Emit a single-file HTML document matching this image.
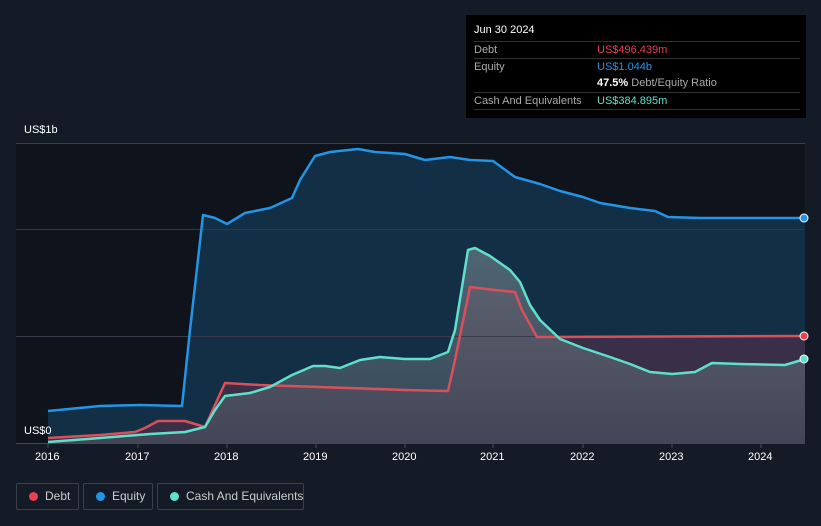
<!DOCTYPE html>
<html><head><meta charset="utf-8"><style>
html,body{margin:0;width:821px;height:526px;overflow:hidden}
body{background:#151b26;font-family:"Liberation Sans",sans-serif;position:relative}
.tt{position:absolute;left:466px;top:15px;width:340px;height:103px;background:#000;color:#fff;font-size:11px}
.tt .r{position:absolute;left:8px;right:6px;border-top:1px solid #333;height:17px;line-height:17px;color:#aaa}
.tt .v{position:absolute;left:123px}
.lg{position:absolute;top:483px;height:27px;border:1px solid #3a404b;border-radius:2px;color:#ccc;font-size:12px;line-height:25px;box-sizing:border-box;white-space:nowrap}
.lg i{position:absolute;left:12px;top:8px;width:9px;height:9px;border-radius:50%}
.lg span{position:absolute;left:28px}
.ax{position:absolute;color:#fff;font-size:11px}
</style></head><body>
<svg width="821" height="526" style="position:absolute;left:0;top:0">
<defs><linearGradient id="cg" x1="0" y1="0" x2="0" y2="1"><stop offset="0" stop-color="#7a8a92" stop-opacity=".6"/><stop offset="1" stop-color="#4a5560" stop-opacity=".6"/></linearGradient></defs>
<rect x="16" y="143" width="789" height="300" fill="#0f131b"/>
<path d="M48,411 L100,406 140,405 182,406 190,330 203,215 215,218 227,224 245,213 270,208 292,198 300,180 315,156 330,152 358,149 375,152 405,154 425,160 450,157 470,160 493,161 515,177 540,184 560,191 583,197 600,203 630,208 655,211 668,217 700,218 761,218 805,218 L805,443 48,443Z" fill="#133049" opacity=".95"/>
<path d="M48,438 L100,435 135,432 145,428 158,421 185,421 205,427 215,405 225,383 260,385 320,387 405,390 448,391 455,360 470,287 495,290 515,292 522,310 537,337 805,336 L805,443 48,443Z" fill="#5a3048" opacity=".55"/>
<path d="M48,442 L100,438 150,434 185,432 205,427 215,410 225,396 250,393 270,387 292,375 313,366 325,366 340,368 360,360 380,357 405,359 430,359 448,352 455,330 468,250 475,248 490,256 510,270 520,282 530,305 540,320 560,339 583,348 610,357 630,364 650,372 672,374 695,372 712,363 740,364 785,365 805,359 L805,443 48,443Z" fill="url(#cg)"/>
<line x1="16" y1="143.5" x2="805" y2="143.5" stroke="#3a404a"/>
<line x1="16" y1="229.5" x2="805" y2="229.5" stroke="#2a3a4a"/>
<line x1="16" y1="336.5" x2="805" y2="336.5" stroke="#3a3a4a"/>
<line x1="16" y1="443.5" x2="805" y2="443.5" stroke="#444a55"/>
<g stroke="#444a55"><line x1="48" y1="443" x2="48" y2="448"/><line x1="138" y1="443" x2="138" y2="448"/><line x1="227" y1="443" x2="227" y2="448"/><line x1="316" y1="443" x2="316" y2="448"/><line x1="405" y1="443" x2="405" y2="448"/><line x1="493" y1="443" x2="493" y2="448"/><line x1="583" y1="443" x2="583" y2="448"/><line x1="672" y1="443" x2="672" y2="448"/><line x1="761" y1="443" x2="761" y2="448"/></g>
<g fill="none" stroke-width="2.5" stroke-linejoin="round">
<path d="M48,411 L100,406 140,405 182,406 190,330 203,215 215,218 227,224 245,213 270,208 292,198 300,180 315,156 330,152 358,149 375,152 405,154 425,160 450,157 470,160 493,161 515,177 540,184 560,191 583,197 600,203 630,208 655,211 668,217 700,218 761,218 805,218" stroke="#2394e6"/>
<path d="M48,438 L100,435 135,432 145,428 158,421 185,421 205,427 215,405 225,383 260,385 320,387 405,390 448,391 455,360 470,287 495,290 515,292 522,310 537,337 805,336" stroke="#d9505c"/>
<path d="M48,442 L100,438 150,434 185,432 205,427 215,410 225,396 250,393 270,387 292,375 313,366 325,366 340,368 360,360 380,357 405,359 430,359 448,352 455,330 468,250 475,248 490,256 510,270 520,282 530,305 540,320 560,339 583,348 610,357 630,364 650,372 672,374 695,372 712,363 740,364 785,365 805,359" stroke="#5ee0cc"/>
</g>
<circle cx="804" cy="218" r="4" fill="#2394e6" stroke="#fff" stroke-width="1"/>
<circle cx="804" cy="336" r="4" fill="#e8414f" stroke="#fff" stroke-width="1"/>
<circle cx="804" cy="359" r="4" fill="#5ee0cc" stroke="#fff" stroke-width="1"/>
</svg>
<div class="ax" style="left:24px;top:124px">US$1b</div>
<div class="ax" style="left:24px;top:425px">US$0</div>
<div class="ax" style="left:35px;top:451px">2016</div>
<div class="ax" style="left:125px;top:451px">2017</div>
<div class="ax" style="left:214px;top:451px">2018</div>
<div class="ax" style="left:303px;top:451px">2019</div>
<div class="ax" style="left:392px;top:451px">2020</div>
<div class="ax" style="left:480px;top:451px">2021</div>
<div class="ax" style="left:570px;top:451px">2022</div>
<div class="ax" style="left:659px;top:451px">2023</div>
<div class="ax" style="left:748px;top:451px">2024</div>
<div class="tt">
<div style="position:absolute;left:8px;top:9px;color:#fff">Jun 30 2024</div>
<div class="r" style="top:26px">Debt<span class="v" style="color:#e8414f">US$496.439m</span></div>
<div class="r" style="top:43px">Equity<span class="v" style="color:#2394e6">US$1.044b</span></div>
<div class="r" style="top:60px;border:none"><span class="v" style="color:#aaa"><b style="color:#fff">47.5%</b> Debt/Equity Ratio</span></div>
<div class="r" style="top:77px">Cash And Equivalents<span class="v" style="color:#5ee0cc">US$384.895m</span></div>
<div class="r" style="top:94px;height:0"></div>
</div>
<div class="lg" style="left:16px;width:63px"><i style="background:#e8414f"></i><span>Debt</span></div>
<div class="lg" style="left:83px;width:70px"><i style="background:#2394e6"></i><span>Equity</span></div>
<div class="lg" style="left:157px;width:147px"><i style="background:#5ee0cc"></i><span>Cash And Equivalents</span></div>
</body></html>
